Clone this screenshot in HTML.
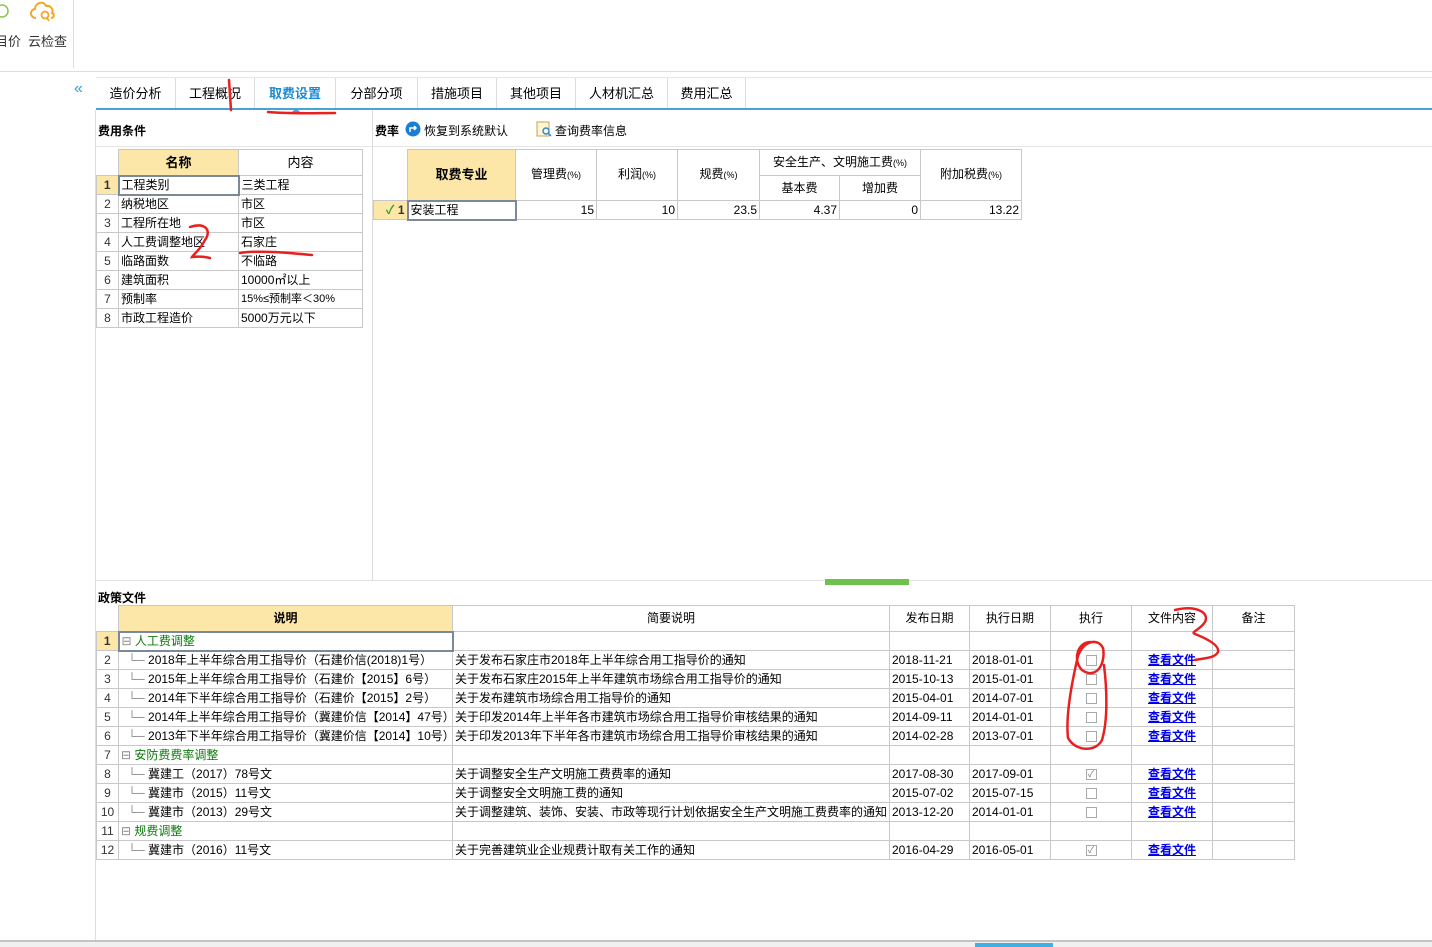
<!DOCTYPE html>
<html><head><meta charset="utf-8">
<style>
*{margin:0;padding:0;box-sizing:border-box}
body{width:1432px;height:947px;overflow:hidden;background:#fff;position:relative;font-family:"Liberation Sans","Noto Sans CJK SC","WenQuanYi Zen Hei",sans-serif;font-size:12px;color:#000}
.a{position:absolute}
table{border-collapse:collapse;table-layout:fixed;position:absolute}
td{border:1px solid #c8c8c8;height:19px;padding:0 2px;white-space:nowrap;overflow:hidden;font-size:12px;line-height:17px}
.n{text-align:center;color:#333;background:#fff}
.hd{background:#fde7a8;font-weight:bold;text-align:center}
.hc{text-align:center}
.r{text-align:right}
.g{color:#0a7a0a}
.lk{color:#0000ee;text-decoration:underline;font-weight:bold;text-align:center}
.tab{position:absolute;top:78px;height:30px;line-height:32px;font-size:13px;text-align:center;border-right:1px solid #ddd}
.cb{display:inline-block;width:11px;height:11px;border:1px solid #aaa;vertical-align:middle;position:relative}
.tr{color:#888}
</style></head><body>
<div class="a" style="left:0;top:0;width:1432px;height:72px;border-bottom:1px solid #ddd"></div>
<div class="a" style="left:73px;top:0;width:1px;height:68px;background:#ddd"></div>
<svg class="a" style="left:0;top:0" width="70" height="30"><circle cx="2" cy="11" r="6" fill="none" stroke="#8bc34a" stroke-width="1.5"/><path d="M36 18c-6 0-7-8-1-9 0-6 8-9 11-3 4-1 8 3 6 7 3 1 2 5-1 5" fill="none" stroke="#f5a623" stroke-width="2"/><circle cx="45" cy="15" r="3.5" fill="none" stroke="#f5a623" stroke-width="1.8"/><path d="M47 18l2 3" stroke="#f5a623" stroke-width="1.8"/></svg>
<div class="a" style="left:-5px;top:31px;font-size:13px;color:#333">目价</div>
<div class="a" style="left:28px;top:31px;font-size:13px;color:#333">云检查</div>
<div class="a" style="left:74px;top:80px;color:#3a9bd5;font-size:16px">«</div>
<div class="a" style="left:96px;top:77px;width:1336px;height:1px;background:#e5e5e5"></div>
<div class="tab" style="left:96px;width:80px">造价分析</div>
<div class="tab" style="left:176px;width:79px">工程概况</div>
<div class="tab" style="left:255px;width:81px;color:#1a8ad4;font-weight:bold">取费设置</div>
<div class="tab" style="left:336px;width:82px">分部分项</div>
<div class="tab" style="left:418px;width:79px">措施项目</div>
<div class="tab" style="left:497px;width:79px">其他项目</div>
<div class="tab" style="left:576px;width:92px">人材机汇总</div>
<div class="tab" style="left:668px;width:78px">费用汇总</div>
<div class="a" style="left:96px;top:108px;width:1336px;height:2px;background:#4aa3d8"></div>
<div class="a" style="left:291px;top:103px;width:0;height:0;border:5px solid transparent;border-bottom-color:#4aa3d8"></div>
<div class="a" style="left:95px;top:110px;width:1px;height:831px;background:#ddd"></div>
<div class="a" style="left:372px;top:110px;width:1px;height:470px;background:#ddd"></div>
<div class="a" style="left:98px;top:122px;font-weight:bold;font-size:12px">费用条件</div>
<div class="a" style="left:96px;top:146px;width:276px;height:1px;background:#e5e5e5"></div>
<table style="left:96px;top:149px;width:266px">
<colgroup><col style="width:22px"><col style="width:120px"><col style="width:124px"></colgroup>
<tr style="height:26px"><td style="border:none;border-bottom:1px solid #c8c8c8"></td><td class="hd" style="font-size:13px">名称</td><td class="hc" style="font-size:13px">内容</td></tr>
<tr><td class="n" style="background:#fde7a8;font-weight:bold">1</td><td style="border:2px solid #7a8a99">工程类别</td><td>三类工程</td></tr>
<tr><td class="n">2</td><td>纳税地区</td><td>市区</td></tr>
<tr><td class="n">3</td><td>工程所在地</td><td>市区</td></tr>
<tr><td class="n">4</td><td>人工费调整地区</td><td>石家庄</td></tr>
<tr><td class="n">5</td><td>临路面数</td><td>不临路</td></tr>
<tr><td class="n">6</td><td>建筑面积</td><td>10000㎡以上</td></tr>
<tr><td class="n">7</td><td>预制率</td><td style="font-size:11px">15%≤预制率＜30%</td></tr>
<tr><td class="n">8</td><td>市政工程造价</td><td>5000万元以下</td></tr>
</table>
<div class="a" style="left:375px;top:122px;font-weight:bold">费率</div>
<svg class="a" style="left:405px;top:121px" width="16" height="16"><circle cx="8" cy="8" r="7.5" fill="#1a7fd4"/><path d="M5 11V7h6M9 5l2 2-2 2" fill="none" stroke="#fff" stroke-width="1.5"/></svg>
<div class="a" style="left:424px;top:122px">恢复到系统默认</div>
<svg class="a" style="left:536px;top:121px" width="16" height="16"><rect x="1" y="1" width="12" height="14" fill="#fff6d8" stroke="#c9a04a"/><circle cx="10" cy="10" r="3" fill="none" stroke="#2a8ad4" stroke-width="1.5"/><path d="M12 12l3 3" stroke="#2a8ad4" stroke-width="1.5"/></svg>
<div class="a" style="left:555px;top:122px">查询费率信息</div>
<div class="a" style="left:373px;top:146px;width:1059px;height:1px;background:#e5e5e5"></div>
<table style="left:373px;top:149px;width:648px">
<colgroup><col style="width:34px"><col style="width:108px"><col style="width:81px"><col style="width:81px"><col style="width:82px"><col style="width:80px"><col style="width:81px"><col style="width:101px"></colgroup>
<tr style="height:26px"><td rowspan="2" style="border:none;border-bottom:1px solid #c8c8c8"></td><td rowspan="2" class="hd" style="font-size:13px">取费专业</td><td rowspan="2" class="hc">管理费<span style="font-size:9px">(%)</span></td><td rowspan="2" class="hc">利润<span style="font-size:9px">(%)</span></td><td rowspan="2" class="hc">规费<span style="font-size:9px">(%)</span></td><td colspan="2" class="hc">安全生产、文明施工费<span style="font-size:9px">(%)</span></td><td rowspan="2" class="hc">附加税费<span style="font-size:9px">(%)</span></td></tr>
<tr style="height:25px"><td class="hc">基本费</td><td class="hc">增加费</td></tr>
<tr><td class="n" style="background:#fde7a8;font-weight:bold;text-align:right"><span style="color:#3aa02a">✓</span> 1</td><td style="border:2px solid #7a8a99">安装工程</td><td class="r">15</td><td class="r">10</td><td class="r">23.5</td><td class="r">4.37</td><td class="r">0</td><td class="r">13.22</td></tr>
</table>
<div class="a" style="left:96px;top:580px;width:1336px;height:1px;background:#e0e0e0"></div>
<div class="a" style="left:825px;top:579px;width:84px;height:6px;background:#6cc24a"></div>
<div class="a" style="left:98px;top:589px;font-weight:bold">政策文件</div>
<table style="left:96px;top:605px;width:1198px">
<colgroup><col style="width:22px"><col style="width:334px"><col style="width:437px"><col style="width:80px"><col style="width:81px"><col style="width:81px"><col style="width:81px"><col style="width:82px"></colgroup>
<tr style="height:26px"><td style="border:none;border-bottom:1px solid #c8c8c8"></td><td class="hd">说明</td><td class="hc">简要说明</td><td class="hc">发布日期</td><td class="hc">执行日期</td><td class="hc">执行</td><td class="hc">文件内容</td><td class="hc">备注</td></tr>
<tr><td class="n" style="background:#fde7a8;font-weight:bold">1</td><td class="g" style="border:2px solid #7a8a99"><span class="tr">⊟</span> 人工费调整</td><td></td><td></td><td></td><td></td><td></td><td></td></tr>
<tr><td class="n">2</td><td><span class="tr">&nbsp;&nbsp;└─ </span>2018年上半年综合用工指导价（石建价信(2018)1号）</td><td>关于发布石家庄市2018年上半年综合用工指导价的通知</td><td>2018-11-21</td><td>2018-01-01</td><td class="hc"><span class="cb"></span></td><td class="lk">查看文件</td><td></td></tr>
<tr><td class="n">3</td><td><span class="tr">&nbsp;&nbsp;└─ </span>2015年上半年综合用工指导价（石建价【2015】6号）</td><td>关于发布石家庄2015年上半年建筑市场综合用工指导价的通知</td><td>2015-10-13</td><td>2015-01-01</td><td class="hc"><span class="cb"></span></td><td class="lk">查看文件</td><td></td></tr>
<tr><td class="n">4</td><td><span class="tr">&nbsp;&nbsp;└─ </span>2014年下半年综合用工指导价（石建价【2015】2号）</td><td>关于发布建筑市场综合用工指导价的通知</td><td>2015-04-01</td><td>2014-07-01</td><td class="hc"><span class="cb"></span></td><td class="lk">查看文件</td><td></td></tr>
<tr><td class="n">5</td><td><span class="tr">&nbsp;&nbsp;└─ </span>2014年上半年综合用工指导价（冀建价信【2014】47号）</td><td>关于印发2014年上半年各市建筑市场综合用工指导价审核结果的通知</td><td>2014-09-11</td><td>2014-01-01</td><td class="hc"><span class="cb"></span></td><td class="lk">查看文件</td><td></td></tr>
<tr><td class="n">6</td><td><span class="tr">&nbsp;&nbsp;└─ </span>2013年下半年综合用工指导价（冀建价信【2014】10号）</td><td>关于印发2013年下半年各市建筑市场综合用工指导价审核结果的通知</td><td>2014-02-28</td><td>2013-07-01</td><td class="hc"><span class="cb"></span></td><td class="lk">查看文件</td><td></td></tr>
<tr><td class="n">7</td><td class="g"><span class="tr">⊟</span> 安防费费率调整</td><td></td><td></td><td></td><td></td><td></td><td></td></tr>
<tr><td class="n">8</td><td><span class="tr">&nbsp;&nbsp;└─ </span>冀建工（2017）78号文</td><td>关于调整安全生产文明施工费费率的通知</td><td>2017-08-30</td><td>2017-09-01</td><td class="hc"><span class="cb" style="font-size:9px;line-height:9px;color:#777">✓</span></td><td class="lk">查看文件</td><td></td></tr>
<tr><td class="n">9</td><td><span class="tr">&nbsp;&nbsp;└─ </span>冀建市（2015）11号文</td><td>关于调整安全文明施工费的通知</td><td>2015-07-02</td><td>2015-07-15</td><td class="hc"><span class="cb"></span></td><td class="lk">查看文件</td><td></td></tr>
<tr><td class="n">10</td><td><span class="tr">&nbsp;&nbsp;└─ </span>冀建市（2013）29号文</td><td>关于调整建筑、装饰、安装、市政等现行计划依据安全生产文明施工费费率的通知</td><td>2013-12-20</td><td>2014-01-01</td><td class="hc"><span class="cb"></span></td><td class="lk">查看文件</td><td></td></tr>
<tr><td class="n">11</td><td class="g"><span class="tr">⊟</span> 规费调整</td><td></td><td></td><td></td><td></td><td></td><td></td></tr>
<tr><td class="n">12</td><td><span class="tr">&nbsp;&nbsp;└─ </span>冀建市（2016）11号文</td><td>关于完善建筑业企业规费计取有关工作的通知</td><td>2016-04-29</td><td>2016-05-01</td><td class="hc"><span class="cb" style="font-size:9px;line-height:9px;color:#777">✓</span></td><td class="lk">查看文件</td><td></td></tr>
</table>
<div class="a" style="left:0;top:940px;width:1432px;height:2px;background:#c4c4c4"></div>
<div class="a" style="left:0;top:942px;width:1432px;height:5px;background:#f0f0f0"></div>
<div class="a" style="left:975px;top:943px;width:78px;height:4px;background:#3fb0e6"></div>
<svg class="a" style="left:0;top:0" width="1432" height="947" fill="none" stroke="#e82020" stroke-width="2.5" stroke-linecap="round">
<path d="M229 80 L231 110"/>
<path d="M268 112 C290 114 315 113 335 113"/>
<path d="M190 227 C205 222 212 230 205 240 C200 250 193 255 192 257 C200 256 205 257 210 258"/>
<path d="M240 253 C260 250 290 253 312 255"/>
<path d="M1175 610 C1195 605 1210 612 1205 622 C1200 630 1190 632 1195 634 C1205 638 1220 645 1218 652 C1215 658 1205 658 1195 660"/>
<path d="M1090 642 C1078 642 1072 660 1082 670 C1096 680 1106 664 1103 648 C1098 638 1084 640 1078 656 C1070 690 1066 720 1068 738 C1076 752 1096 752 1102 740 C1108 720 1107 690 1104 665"/>
</svg>
</body></html>
